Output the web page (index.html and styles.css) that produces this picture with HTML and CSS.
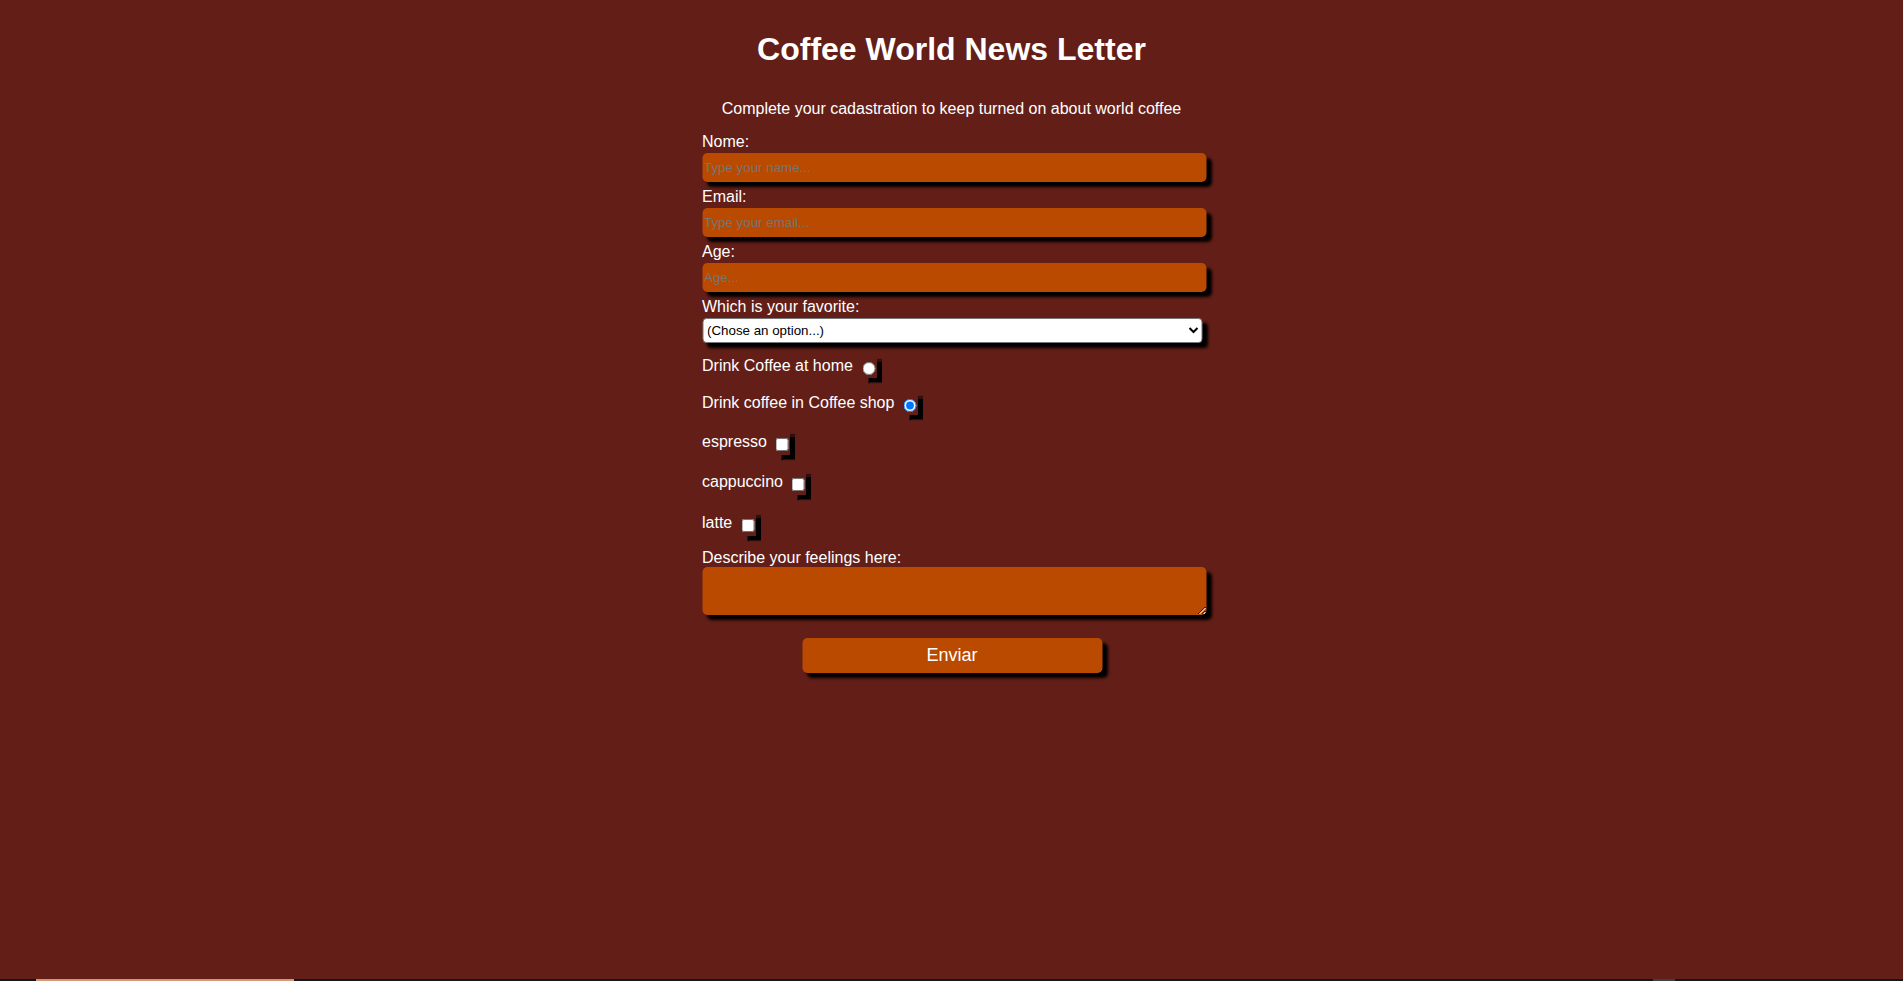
FILE: index.html
```html
<!DOCTYPE html>
<html lang="en">
<head>
<meta charset="utf-8">
<title>Coffee World News Letter</title>
<link rel="stylesheet" href="styles.css">
</head>
<body>
<main class="page">
  <h1 class="title">Coffee World News Letter</h1>
  <p class="subtitle">Complete your cadastration to keep turned on about world coffee</p>
  <form class="form" onsubmit="return false">
    <div class="field">
      <label class="label" for="nome">Nome:</label>
      <input class="text-input" id="nome" type="text" placeholder="Type your name...">
    </div>
    <div class="field">
      <label class="label" for="email">Email:</label>
      <input class="text-input" id="email" type="email" placeholder="Type your email...">
    </div>
    <div class="field">
      <label class="label" for="age">Age:</label>
      <input class="text-input" id="age" type="number" placeholder="Age...">
    </div>
    <div class="field">
      <label class="label" for="fav">Which is your favorite:</label>
      <select class="select" id="fav">
        <option>(Chose an option...)</option>
        <option>Arabica</option>
        <option>Robusta</option>
      </select>
    </div>
    <div class="choices">
      <label class="choice choice-radio"><span>Drink Coffee at home</span><span class="box box-radio"><input class="radio" type="radio" name="where"></span></label>
      <label class="choice choice-radio"><span>Drink coffee in Coffee shop</span><span class="box box-radio"><input class="radio" type="radio" name="where" checked></span></label>
      <label class="choice c1"><span>espresso</span><span class="box box-check"><input class="check" type="checkbox"></span></label>
      <label class="choice c2"><span>cappuccino</span><span class="box box-check"><input class="check" type="checkbox"></span></label>
      <label class="choice c1"><span>latte</span><span class="box box-check"><input class="check" type="checkbox"></span></label>
    </div>
    <div class="field field-area">
      <label class="label" for="feel">Describe your feelings here:</label>
      <textarea class="area" id="feel"></textarea>
    </div>
    <div class="actions">
      <button class="btn" type="submit">Enviar</button>
    </div>
  </form>
</main>
<div class="taskbar">
  <div class="tb-gap"></div>
  <div class="tb-app"></div>
  <div class="tb-mark"></div>
  <div class="tb-rest"></div>
</div>
</body>
</html>
```

FILE: styles.css
```css
html, body {
  margin: 0;
  padding: 0;
}

body {
  background: #631e18;
  color: #ffffff;
  font-family: "Liberation Sans", Arial, sans-serif;
  min-height: 100vh;
  display: flex;
  flex-direction: column;
}

.page {
  flex: 1;
  display: flex;
  flex-direction: column;
  align-items: center;
  padding-top: 31px;
}

.title {
  margin: 0;
  font-size: 32px;
  line-height: 37px;
  font-weight: bold;
  color: #ffffff;
}

.subtitle {
  margin: 32px 0 0;
  font-size: 16px;
  line-height: 18px;
}

.form {
  margin-top: 15px;
  width: 500px;
  display: flex;
  flex-direction: column;
  transform: translateX(0.5px);
}

.field {
  display: flex;
  flex-direction: column;
  align-items: flex-start;
  margin-bottom: 6px;
}

.label {
  font-size: 16px;
  line-height: 18px;
  color: #ffffff;
}

.text-input {
  margin-top: 2px;
  width: 504px;
  height: 29px;
  box-sizing: border-box;
  padding: 0 2px;
  border: none;
  border-radius: 5px;
  background: #b94a00;
  color: #000;
  font-family: "Liberation Sans", Arial, sans-serif;
  font-size: 13.33px;
  box-shadow: 5px 5px 3px #000;
  outline: none;
  -moz-appearance: textfield;
}

.text-input::-webkit-outer-spin-button,
.text-input::-webkit-inner-spin-button {
  -webkit-appearance: none;
  margin: 0;
}

.text-input::placeholder {
  color: #757575;
}

.select {
  margin-top: 2px;
  width: 500px;
  height: 25px;
  box-sizing: border-box;
  border: 1px solid #767676;
  border-radius: 4px;
  background: #ffffff;
  color: #000;
  font-family: "Liberation Sans", Arial, sans-serif;
  font-size: 13.33px;
  box-shadow: 5px 5px 3px #000;
}

.choices {
  margin-top: -2px;
  display: flex;
  flex-direction: column;
}

.choice {
  display: flex;
  align-items: center;
  font-size: 16px;
  line-height: 18px;
}

.choice-radio {
  height: 37px;
}

.c1 {
  height: 41px;
}

.c2 {
  height: 40px;
}

.box {
  display: block;
  width: 14px;
  box-shadow: 5px 5px 1px #000;
}

.box-radio {
  height: 24px;
  margin-left: 9.5px;
}

.box-check {
  height: 26px;
  margin-left: 9px;
}

.radio {
  display: block;
  width: 13px;
  height: 13px;
  margin: 8px 0 0;
}

.check {
  display: block;
  width: 13px;
  height: 13px;
  margin: 9px 0 0;
}

.field-area {
  margin-top: 6px;
  margin-bottom: 0;
}

.area {
  width: 504px;
  height: 48px;
  box-sizing: border-box;
  margin: 0;
  padding: 2px;
  border: none;
  border-radius: 5px;
  background: #b94a00;
  box-shadow: 5px 5px 3px #000;
  font-family: "Liberation Sans", Arial, sans-serif;
  font-size: 13.33px;
  outline: none;
}

.actions {
  display: flex;
  justify-content: center;
  margin-top: 23px;
}

.btn {
  width: 300px;
  height: 35px;
  border: none;
  border-radius: 5px;
  background: #b94a00;
  color: #ffffff;
  font-family: "Liberation Sans", Arial, sans-serif;
  font-size: 18px;
  box-shadow: 5px 5px 3px #000;
  cursor: pointer;
}

.taskbar {
  height: 2px;
  display: flex;
  background: #10181c;
}

.tb-gap {
  width: 36px;
}

.tb-app {
  width: 258px;
  background: #d09a78;
}

.tb-mark {
  margin-left: 1359px;
  width: 22px;
  background: #3a4246;
}

.tb-rest {
  flex: 1;
}
```
